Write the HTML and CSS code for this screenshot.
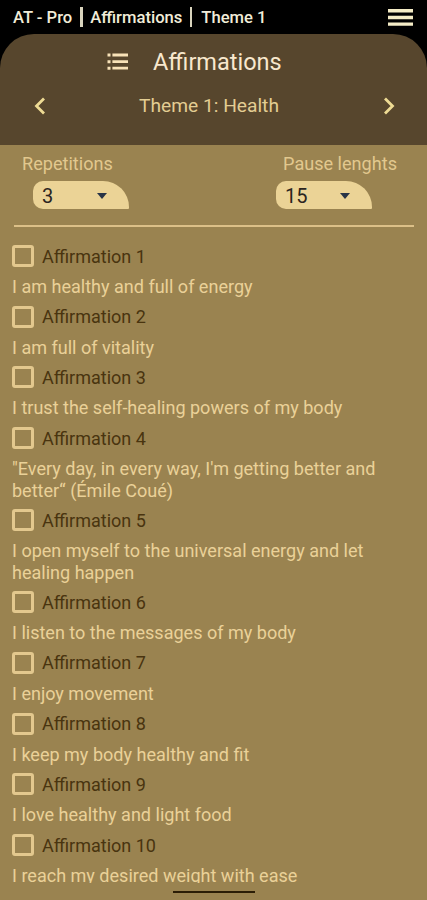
FILE: index.html
```html
<!DOCTYPE html>
<html lang="en">
<head>
  <meta charset="UTF-8" />
  <meta name="viewport" content="width=device-width, initial-scale=1" />
  <title>AT - Pro | Affirmations | Theme 1</title>
  <link rel="stylesheet" href="styles.css">
</head>
<body>

<div class="topbar">
  <div class="crumbs">
    <span>AT - Pro</span><span class="bar thick"></span><span>Affirmations</span><span class="bar"></span><span>Theme 1</span>
  </div>
  <svg class="menu" width="25" height="17" viewBox="0 0 25 17" fill="#f4ecc6">
    <path d="M0 0h25v3.4H0zM0 6.8h25v3.4H0zM0 13.4h25v3.4H0z"/>
  </svg>
</div>

<div class="header">
  <div class="title">
    <svg width="22" height="18" viewBox="0 0 22 18" fill="#f8e2b8">
      <path d="M.5.6h3v3h-3zM5.4.6H21v2.8H5.4zM.5 7.2h3v3h-3zM5.4 7.2H21V10H5.4zM.5 13.8h3v3h-3zM5.4 13.8H21v2.8H5.4z"/>
    </svg>
    <h1>Affirmations</h1>
  </div>
  <div class="theme">
    <svg width="12" height="18" viewBox="0 0 12 18" fill="none" stroke="#eedb94" stroke-width="2.8">
      <path d="M10 1.5 2.5 9l7.5 7.5"/>
    </svg>
    <h2>Theme 1: Health</h2>
    <svg width="12" height="18" viewBox="0 0 12 18" fill="none" stroke="#eedb94" stroke-width="2.8">
      <path d="M2 1.5 9.5 9 2 16.5"/>
    </svg>
  </div>
</div>

<div class="content">
  <div class="settings">
    <div class="setting">
      <div class="name">Repetitions</div>
      <div class="select"><span>3</span><i class="arrow"></i></div>
    </div>
    <div class="setting pause">
      <div class="name">Pause lenghts</div>
      <div class="select"><span>15</span><i class="arrow"></i></div>
    </div>
  </div>

  <div class="list">
    <div class="item">
      <label><input type="checkbox"><span>Affirmation 1</span></label>
      <p>I am healthy and full of energy</p>
    </div>
    <div class="item">
      <label><input type="checkbox"><span>Affirmation 2</span></label>
      <p>I am full of vitality</p>
    </div>
    <div class="item">
      <label><input type="checkbox"><span>Affirmation 3</span></label>
      <p>I trust the self-healing powers of my body</p>
    </div>
    <div class="item">
      <label><input type="checkbox"><span>Affirmation 4</span></label>
      <p>"Every day, in every way, I'm getting better and better“ (Émile Coué)</p>
    </div>
    <div class="item">
      <label><input type="checkbox"><span>Affirmation 5</span></label>
      <p>I open myself to the universal energy and let healing happen</p>
    </div>
    <div class="item">
      <label><input type="checkbox"><span>Affirmation 6</span></label>
      <p>I listen to the messages of my body</p>
    </div>
    <div class="item">
      <label><input type="checkbox"><span>Affirmation 7</span></label>
      <p>I enjoy movement</p>
    </div>
    <div class="item">
      <label><input type="checkbox"><span>Affirmation 8</span></label>
      <p>I keep my body healthy and fit</p>
    </div>
    <div class="item">
      <label><input type="checkbox"><span>Affirmation 9</span></label>
      <p>I love healthy and light food</p>
    </div>
    <div class="item">
      <label><input type="checkbox"><span>Affirmation 10</span></label>
      <p>I reach my desired weight with ease</p>
    </div>
  </div>
</div>

<div class="navbar"><div class="handle"></div></div>

</body>
</html>
```
FILE: styles.css
```css
* {
  box-sizing: border-box;
}
body {
  font-family: Roboto, sans-serif;
  background: #000;
  margin: 0;
  height: 100vh;
  display: flex;
  flex-direction: column;
  overflow: hidden;
}
h1, h2, p {
  margin: 0;
  font-weight: 400;
}
.topbar {
  flex: none;
  height: 34px;
  padding: 2px 14px 0 13px;
  display: flex;
  align-items: center;
  justify-content: space-between;
}
.menu {
  margin-top: -2px;
}
.crumbs {
  display: flex;
  align-items: center;
  color: #f1ecd8;
  font-size: 16.6px;
  font-weight: 500;
  line-height: 20px;
}
.bar {
  width: 2px;
  height: 20px;
  margin: -2px 9px 0 8px;
  background: #d9d4bd;
}
.bar.thick {
  width: 3px;
  margin: -2px 7px 0 8px;
}
.header {
  flex: none;
  height: 111px;
  background: #57462d;
  border-radius: 34px 34px 0 0;
  padding-top: 13px;
}
.title {
  display: flex;
  align-items: center;
  gap: 24px;
  padding-left: 107px;
}
.title h1 {
  font-size: 23.5px;
  line-height: 30px;
  color: #f8e8cd;
}
.theme {
  display: flex;
  align-items: center;
  justify-content: space-between;
  padding: 0 32px 0 34px;
  margin-top: 17px;
}
.theme h2 {
  font-size: 19.2px;
  line-height: 24px;
  margin-right: 11px;
  color: #e3cd93;
}
.content {
  flex: 1;
  min-height: 0;
  background: #9a8350;
  padding: 8px 12px 0;
  overflow: hidden;
}
.settings {
  display: flex;
  justify-content: space-between;
  height: 74px;
  margin: 0 1px 0 2px;
  padding: 0 17px 0 8px;
  border-bottom: 2px solid #dcc088;
}
.name {
  font-size: 18.1px;
  line-height: 22px;
  color: #e2c88e;
}
.select {
  display: flex;
  align-items: center;
  justify-content: space-between;
  width: 96px;
  height: 28px;
  margin: 6px 0 0 11px;
  padding: 1px 22px 0 9px;
  background: #ebd396;
  border-radius: 10px 26px 1px 10px;
  color: #2b2521;
  font-size: 20px;
}
.pause .select {
  margin-left: -7px;
}
.arrow {
  border: 5px solid transparent;
  border-top: 6px solid #283447;
  border-bottom: 0;
}
.list {
  padding-top: 18px;
}
.item {
  padding-bottom: 8.2px;
}
.item label {
  display: flex;
  align-items: center;
  gap: 8px;
  height: 22px;
  color: #49340f;
  font-size: 18px;
}
.item input {
  appearance: none;
  width: 22px;
  height: 22px;
  margin: 0;
  border: 3px solid #e3c88e;
  border-radius: 3px;
}
.item p {
  margin-top: 9.1px;
  font-size: 18.05px;
  line-height: 21.4px;
  color: #ead198;
}
.navbar {
  flex: none;
  height: 17px;
  padding-top: 8px;
  background: #9a8350;
}
.handle {
  width: 82px;
  height: 2px;
  margin: 0 auto;
  background: #2b1d06;
}
```
